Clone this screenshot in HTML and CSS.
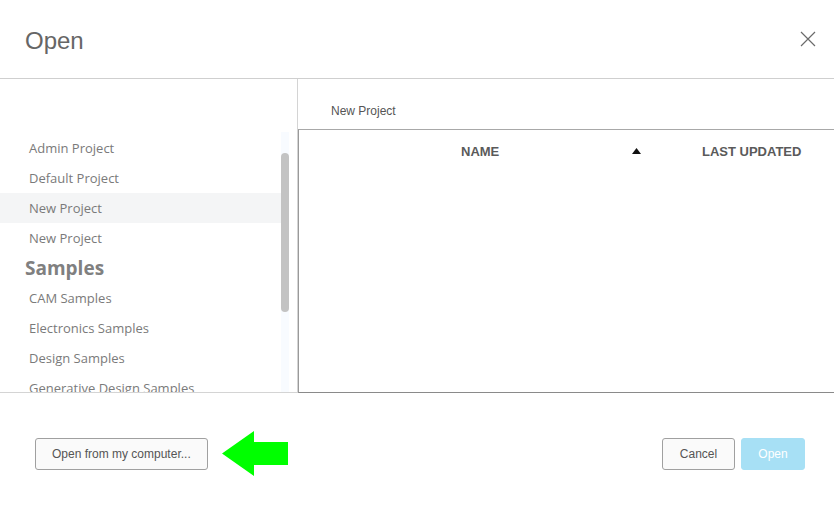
FILE: index.html
```html
<!DOCTYPE html>
<html>
<head>
<meta charset="utf-8">
<link rel="stylesheet" href="styles.css">
</head>
<body>
<div class="dialog">
  <header class="head">
    <h1 class="title">Open</h1>
    <button class="close" aria-label="Close">
      <svg width="16" height="16" viewBox="0 0 16 16"><path d="M1 1L15 15M15 1L1 15" stroke="#6b6b6b" stroke-width="1.2" fill="none"/></svg>
    </button>
  </header>
  <main class="main">
    <aside class="side">
      <ul class="list">
        <li class="item">Admin Project</li>
        <li class="item">Default Project</li>
        <li class="item sel">New Project</li>
        <li class="item">New Project</li>
        <li class="group">Samples</li>
        <li class="item">CAM Samples</li>
        <li class="item">Electronics Samples</li>
        <li class="item">Design Samples</li>
        <li class="item">Generative Design Samples</li>
      </ul>
      <div class="track"><div class="thumb"></div></div>
    </aside>
    <section class="content">
      <div class="crumb">New Project</div>
      <div class="table">
        <div class="thead">
          <span class="col-name">NAME</span>
          <span class="sort">
            <svg width="9" height="6" viewBox="0 0 9 6"><path d="M0 6L4.5 0L9 6Z" fill="#111"/></svg>
          </span>
          <span class="col-date">LAST UPDATED</span>
        </div>
      </div>
    </section>
  </main>
  <footer class="foot">
    <div class="left">
      <button class="btn">Open from my computer...</button>
      <svg class="arrow" width="66" height="45" viewBox="0 0 66 45"><polygon points="0,22.5 32,0 32,11 66,11 66,34 32,34 32,45" fill="#00ff00"/></svg>
    </div>
    <div class="right">
      <button class="btn cancel">Cancel</button>
      <button class="btn primary">Open</button>
    </div>
  </footer>
</div>
</body>
</html>
```
FILE: styles.css
```css
* { box-sizing: border-box; }
html, body { margin: 0; padding: 0; background: #fff; }
body { width: 834px; height: 508px; overflow: hidden; font-family: "Liberation Sans", Arial, sans-serif; }
.dialog { display: flex; flex-direction: column; height: 508px; }

.head {
  height: 79px;
  border-bottom: 1px solid #cfcfcf;
  display: flex;
  align-items: center;
  justify-content: space-between;
  padding: 0 18px 0 25px;
}
.title { margin: 0; font-weight: normal; font-size: 24px; color: #666; position: relative; top: 2px; }
.close { border: 0; background: none; padding: 0; width: 16px; height: 16px; display: flex; }

.main { height: 314px; display: flex; }
.side {
  width: 298px;
  border-right: 1px solid #d4d4d4;
  border-bottom: 1px solid #d4d4d4;
  display: flex;
  overflow: hidden;
}
.list {
  list-style: none;
  margin: 0;
  padding: 54px 0 0 0;
  flex: 1;
  font-family: "Open Sans", sans-serif;
  font-size: 13px;
  color: #7a7a7a;
}
.item { height: 30px; line-height: 31px; padding-left: 29px; white-space: nowrap; }
.item.sel { background: #f4f5f6; }
.group { height: 30px; line-height: 31px; padding-left: 25px; font-weight: bold; font-size: 19px; color: #808080; }
.track { width: 8px; margin: 53px 8px 0 0; background: #f8fbff; }
.thumb { margin-top: 21px; height: 159px; background: #c3c3c3; border-radius: 4px; }

.content { flex: 1; display: flex; flex-direction: column; }
.crumb { height: 50px; padding: 25px 0 0 33px; font-size: 12px; color: #555; }
.table {
  flex: 1;
  border-top: 1px solid #a8a8a8;
  border-left: 1px solid #9a9a9a;
  border-bottom: 1px solid #8a8a8a;
}
.thead {
  display: grid;
  grid-template-columns: 333px 70px 1fr;
  height: 42px;
  align-items: center;
  font-weight: bold;
  font-size: 13px;
  color: #5a5a5a;
}
.col-name { padding-left: 162px; white-space: nowrap; }
.sort { display: flex; }
.col-date { white-space: nowrap; }

.foot { flex: 1; display: flex; justify-content: space-between; padding: 45px 29px 0 35px; align-items: flex-start; }
.left { display: flex; align-items: center; gap: 14px; margin-top: -7px; }
.arrow { display: block; }
.right { display: flex; gap: 6px; }
.btn {
  height: 32px;
  border: 1px solid #a0a0a0;
  border-radius: 3px;
  background: #fafafa;
  font-family: "Liberation Sans", Arial, sans-serif;
  font-size: 12px;
  color: #555;
  padding: 0 16px;
}
.cancel { width: 73px; padding: 0; }
.primary { width: 64px; padding: 0; background: #a7e0f5; border-color: #a7e0f5; color: #fff; }
```
